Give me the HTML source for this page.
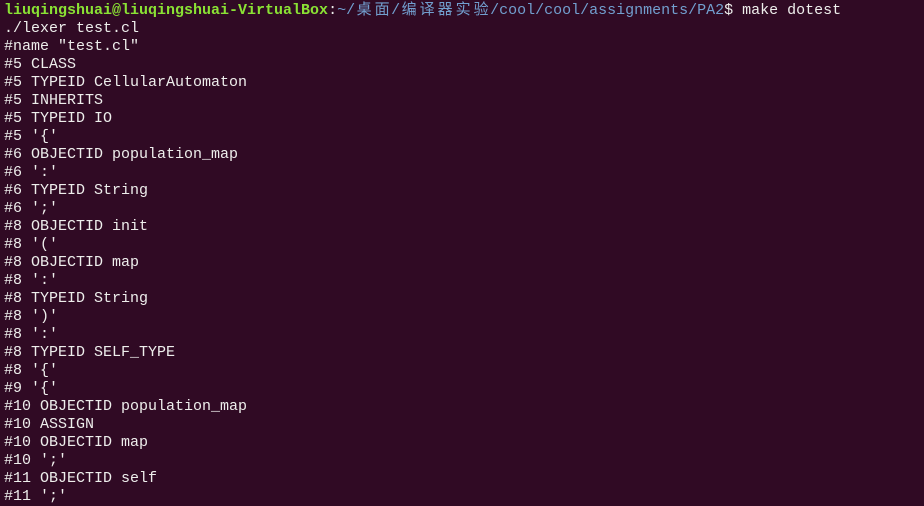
<html><head><style>
body{margin:0;background:#300a24;width:924px;height:493px;overflow:hidden}
pre{margin:0;position:absolute;left:4px;top:2px;font-family:"Liberation Mono","Noto Sans CJK SC",monospace;font-size:15px;line-height:18px;color:#eeeeec}
.g{color:#8ae234;font-weight:bold}.b{color:#729fcf}
.c{display:inline-block;width:18px;text-align:center}
</style></head><body><pre><span class="g">liuqingshuai@liuqingshuai-VirtualBox</span>:<span class="b">~/<span class="c">桌</span><span class="c">面</span>/<span class="c">编</span><span class="c">译</span><span class="c">器</span><span class="c">实</span><span class="c">验</span>/cool/cool/assignments/PA2</span>$ make dotest
./lexer test.cl
#name "test.cl"
#5 CLASS
#5 TYPEID CellularAutomaton
#5 INHERITS
#5 TYPEID IO
#5 '{'
#6 OBJECTID population_map
#6 ':'
#6 TYPEID String
#6 ';'
#8 OBJECTID init
#8 '('
#8 OBJECTID map
#8 ':'
#8 TYPEID String
#8 ')'
#8 ':'
#8 TYPEID SELF_TYPE
#8 '{'
#9 '{'
#10 OBJECTID population_map
#10 ASSIGN
#10 OBJECTID map
#10 ';'
#11 OBJECTID self
#11 ';'
</pre></body></html>
